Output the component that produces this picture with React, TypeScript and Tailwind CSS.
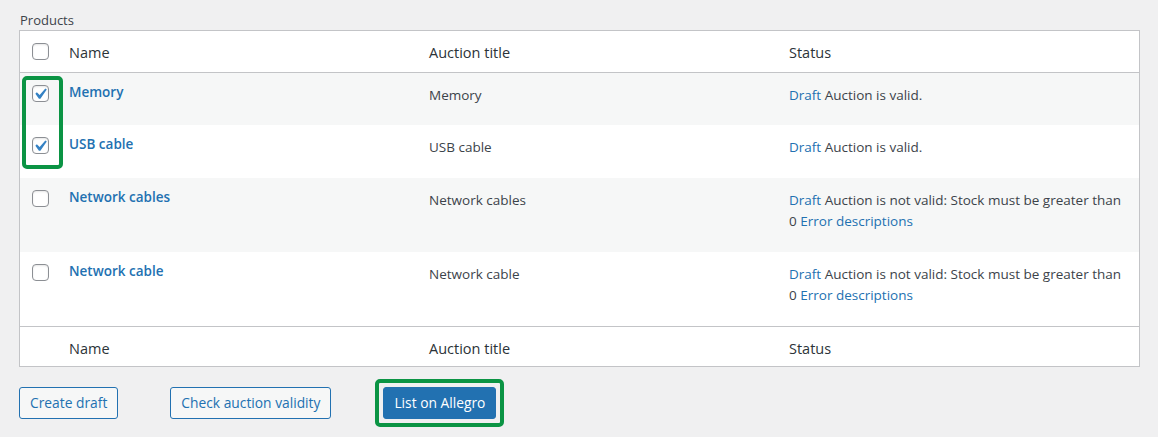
import { FunctionComponent } from 'react'

type Product = {
  name: string
  title: string
  valid: boolean
  checked: boolean
}

const products: Product[] = [
  { name: 'Memory', title: 'Memory', valid: true, checked: true },
  { name: 'USB cable', title: 'USB cable', valid: true, checked: true },
  { name: 'Network cables', title: 'Network cables', valid: false, checked: false },
  { name: 'Network cable', title: 'Network cable', valid: false, checked: false },
]

const Checkbox: FunctionComponent<{ checked?: boolean }> = ({ checked }) => (
  <span className="relative block w-[17px] h-[17px] rounded-[4px] border border-[#8c8f94] bg-white shadow-[inset_0_1px_2px_rgba(0,0,0,0.1)]">
    {checked && (
      <svg viewBox="0 0 20 20" className="absolute w-[22px] h-[22px] -top-[3px] -left-[4px]">
        <path d="M14.83 4.89l1.34.94-5.81 8.38H9.02L5.78 9.67l1.34-1.25 2.57 2.4z" fill="#3582c4" />
      </svg>
    )}
  </span>
)

const HeaderRow: FunctionComponent<{ withCheckbox?: boolean; footer?: boolean }> = ({ withCheckbox, footer }) => (
  <div
    className={`grid grid-cols-[39px_1fr_1fr_1fr] bg-white text-[14.5px] leading-[21px] text-[#2c3338] ${
      footer ? 'border-t border-[#c3c4c7]' : 'border-b border-[#c3c4c7]'
    }`}
  >
    <div className="pt-[12px] pl-[12px]">{withCheckbox && <Checkbox />}</div>
    <div className={`px-[10px] pt-[11px] ${footer ? 'pb-[7px]' : 'pb-[9px]'}`}>Name</div>
    <div className={`px-[10px] pt-[11px] ${footer ? 'pb-[7px]' : 'pb-[9px]'}`}>Auction title</div>
    <div className={`px-[10px] pt-[11px] ${footer ? 'pb-[7px]' : 'pb-[9px]'}`}>Status</div>
  </div>
)

const App: FunctionComponent = () => {
  return (
    <div className="min-h-[437px] bg-[#f0f0f1] pl-[19px] pr-[18px] pt-[10px] font-['Open_Sans',sans-serif] text-[#3c434a]">
      <div className="text-[13px] leading-[20px] pl-[1px]">Products</div>

      <div className="relative border border-[#c3c4c7] bg-white">
        <HeaderRow withCheckbox />

        {products.map((product, index) => (
          <div
            key={product.name}
            className={`grid grid-cols-[39px_1fr_1fr_1fr] ${index % 2 === 0 ? 'bg-[#f6f7f7]' : 'bg-white'}`}
          >
            <div className="pt-[12px] pl-[12px]">
              <Checkbox checked={product.checked} />
            </div>
            <div className="px-[10px] pt-[9px] text-[13.5px] leading-[21px] font-semibold text-[#2271b1]">
              {product.name}
            </div>
            <div className={`px-[10px] pt-[12px] ${index === 0 ? 'pb-[19px]' : 'pb-[20px]'} text-[13.5px] leading-[21px]`}>
              {product.title}
            </div>
            <div className={`px-[10px] pt-[12px] ${index === 0 ? 'pb-[19px]' : 'pb-[20px]'} text-[13.5px] leading-[21px]`}>
              <span className="text-[#2271b1]">Draft</span>{' '}
              {product.valid ? (
                'Auction is valid.'
              ) : (
                <>
                  Auction is not valid: Stock must be greater than 0{' '}
                  <span className="text-[#2271b1]">Error descriptions</span>
                </>
              )}
            </div>
          </div>
        ))}

        <HeaderRow footer />

        {/* highlight around the selected rows */}
        <div className="absolute left-[2px] top-[45px] w-[41px] h-[93px] rounded-[5px] border-4 border-[#0b9444]" />
      </div>

      <div className="flex items-center mt-[12px] text-[13.8px]">
        <button className="h-[32px] px-[10px] rounded-[3px] border border-[#2271b1] bg-[#f6f7f7] text-[#2271b1]">
          Create draft
        </button>
        <button className="ml-[52px] h-[32px] px-[10px] rounded-[3px] border border-[#2271b1] bg-[#f6f7f7] text-[#2271b1]">
          Check auction validity
        </button>
        <div className="ml-[44px] p-[4px] rounded-[5px] border-4 border-[#0b9444]">
          <button className="block h-[32px] px-[10px] rounded-[3px] border border-[#2271b1] bg-[#2271b1] text-white">
            List on Allegro
          </button>
        </div>
      </div>
    </div>
  )
}

export default App
